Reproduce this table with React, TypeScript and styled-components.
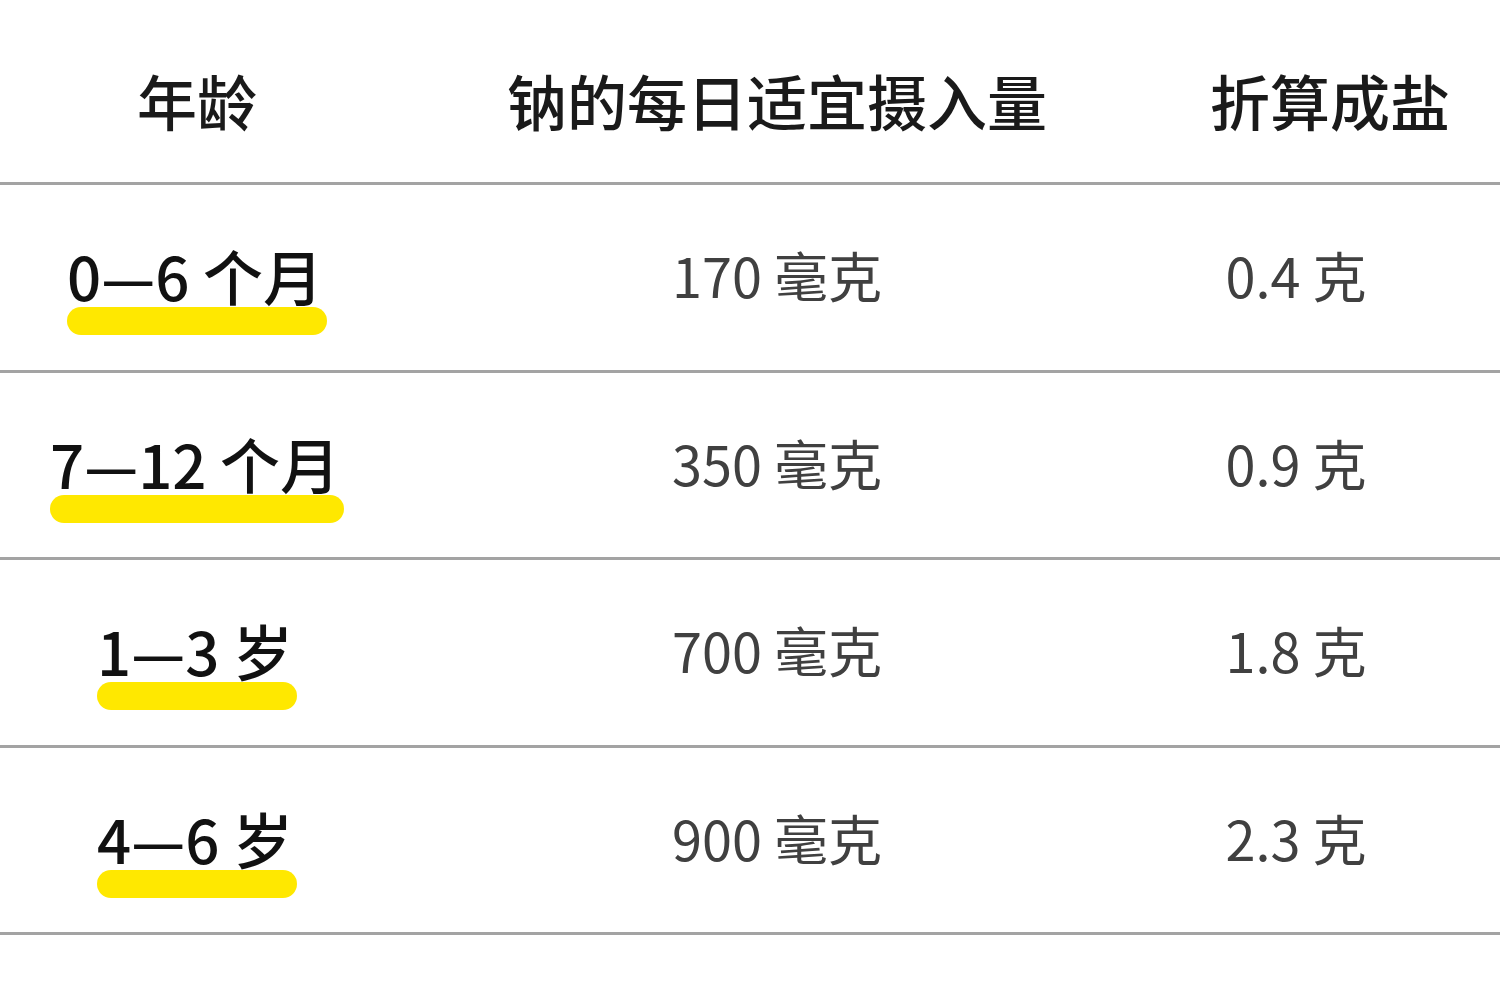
import styled, { createGlobalStyle } from "styled-components"

const GlobalStyle = createGlobalStyle`
html, body {
  margin: 0;
  padding: 0;
  background: #ffffff;
}
body {
  font-family: "Noto Sans CJK SC", "Noto Sans", sans-serif;
}
`

const rows = [
  { age: "0—6 个月", sodium: "170 毫克", salt: "0.4 克" },
  { age: "7—12 个月", sodium: "350 毫克", salt: "0.9 克" },
  { age: "1—3 岁", sodium: "700 毫克", salt: "1.8 克" },
  { age: "4—6 岁", sodium: "900 毫克", salt: "2.3 克" },
]

const App = () => {
  return (
    <Page>
      <GlobalStyle />
      <Table>
        <HeadRow>
          <HeadCell>年龄</HeadCell>
          <HeadCell>钠的每日适宜摄入量</HeadCell>
          <HeadCell>折算成盐</HeadCell>
        </HeadRow>
        {rows.map((r) => (
          <Row key={r.age}>
            <Cell>
              <Marked>
                <AgeText>{r.age}</AgeText>
                <Marker />
              </Marked>
            </Cell>
            <Cell>
              <ValueText>{r.sodium}</ValueText>
            </Cell>
            <Cell padRight={68}>
              <ValueText>{r.salt}</ValueText>
            </Cell>
          </Row>
        ))}
      </Table>
    </Page>
  )
}

export default App

const Page = styled.div`
width: 1500px;
height: 1000px;
background: #fff;
overflow: hidden;
`
const Table = styled.div`
display: flex;
flex-direction: column;
`
const HeadRow = styled.div`
display: grid;
grid-template-columns: 394px 766px 340px;
height: 185px;
box-sizing: border-box;
padding-top: 68px;
border-bottom: 3px solid #a3a3a3;
`
const HeadCell = styled.div`
text-align: center;
font-size: 60px;
line-height: 64px;
font-weight: 500;
color: #1a1a1a;
`
const Row = styled.div`
display: grid;
grid-template-columns: 394px 766px 340px;
height: 187.5px;
box-sizing: border-box;
padding-top: 58px;
border-bottom: 3px solid #a3a3a3;
`
const Cell = styled.div<{ padRight?: number }>`
display: flex;
justify-content: center;
align-items: flex-start;
padding-right: ${(p) => p.padRight ?? 0}px;
`
const Marked = styled.div`
display: inline-flex;
flex-direction: column;
align-items: stretch;
`
const AgeText = styled.div`
font-size: 60px;
line-height: 64px;
font-weight: 500;
color: #111;
white-space: nowrap;
padding-right: 4px;
`
const Marker = styled.div`
height: 28px;
margin-top: 0px;
border-radius: 14px;
background: #ffe800;
`
const ValueText = styled.div`
font-size: 54px;
line-height: 64px;
font-weight: 400;
color: #404040;
white-space: nowrap;
`
